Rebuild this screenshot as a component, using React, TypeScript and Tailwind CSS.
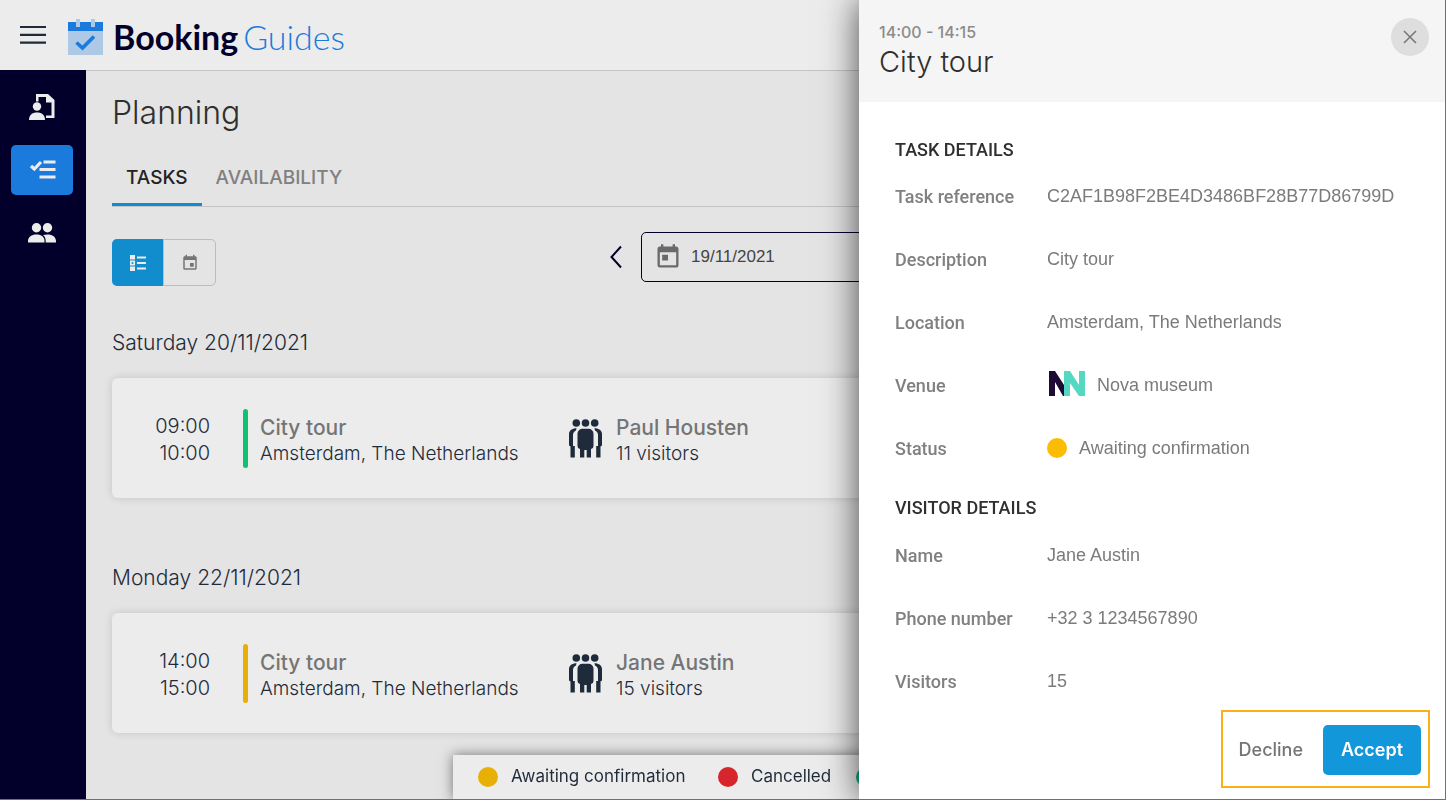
import type { ReactNode } from "react";
import { MdEvent, MdToday } from "react-icons/md";

type Task = {
  start: string;
  end: string;
  title: string;
  place: string;
  guest: string;
  visitors: string;
  bar: string;
};

const days: { label: string; task: Task }[] = [
  {
    label: "Saturday 20/11/2021",
    task: {
      start: "09:00",
      end: "10:00",
      title: "City tour",
      place: "Amsterdam, The Netherlands",
      guest: "Paul Housten",
      visitors: "11 visitors",
      bar: "bg-[#0fc173]",
    },
  },
  {
    label: "Monday 22/11/2021",
    task: {
      start: "14:00",
      end: "15:00",
      title: "City tour",
      place: "Amsterdam, The Netherlands",
      guest: "Jane Austin",
      visitors: "15 visitors",
      bar: "bg-[#e8b004]",
    },
  },
];

function Logo() {
  return (
    <a href="#home" className="flex items-center pt-1">
      <svg width="35" height="36" viewBox="0 0 35 36" aria-hidden="true">
        <rect y="3" width="35" height="33" fill="#adc9e5" />
        <rect y="3" width="35" height="9" fill="#1b7bdc" />
        <rect x="8" width="4" height="8" fill="#adc9e5" />
        <rect x="23" width="4" height="8" fill="#adc9e5" />
        <path d="M8.500 23.500l6 5.500L26 17.500" fill="none" stroke="#1b7bdc" strokeWidth="3.600" />
      </svg>
      <span className="ml-[10px] font-[Lato] text-[34px] leading-10 font-bold text-[#02002b]">Booking</span>
      <span className="ml-[5px] font-[Lato] text-[34px] leading-10 font-light text-[#1b7bdc]">Guides</span>
    </a>
  );
}

function GuideIcon() {
  return (
    <svg width="28" height="28" viewBox="0 0 28 28" aria-hidden="true" fill="#ececec">
      <path d="M8 8.500V1h12l6.500 6v18H18v-2.500h5.500V9.500H18V4h-7.500v4.500z" />
      <circle cx="9" cy="13.500" r="4.200" />
      <path d="M1 27c0-5 3-7.500 8-7.500s8 2.500 8 7.500z" />
    </svg>
  );
}

function ChecklistIcon() {
  return (
    <svg width="28" height="24" viewBox="0 0 28 24" aria-hidden="true" fill="none" stroke="#ececec">
      <path d="M3 8l3.300 3L13 4" strokeWidth="3.200" />
      <path d="M15.500 4H27.500M11.500 11.500h16M11.500 19h16" strokeWidth="2.800" />
    </svg>
  );
}

function PeopleIcon() {
  return (
    <svg width="28" height="20" viewBox="0 0 28 20" aria-hidden="true" fill="#ececec">
      <circle cx="8.500" cy="4.800" r="4.700" />
      <circle cx="19.500" cy="4.800" r="4.700" />
      <path d="M0 19.500V18c0-4 3.500-6.500 8.500-6.500S16.500 14 16.500 18v1.500z" />
      <path d="M17.700 19.500V18c0-2.700-1-4.700-2.700-6 1.300-.4 2.800-.6 4.500-.6 5 0 8.500 2.600 8.500 6.600v1.500z" />
    </svg>
  );
}

function ListIcon() {
  return (
    <svg width="18" height="18" viewBox="0 0 18 18" aria-hidden="true" fill="#ececec">
      <path d="M1 1h5v4.500H1zM1 6.500h5v5H1zM1 12.500h5V17H1zM8 2.500h9v2H8zM8 8h9v2H8zM8 13.500h9v2H8z" />
      <circle cx="3.500" cy="9" r="1" fill="#118dce" />
    </svg>
  );
}

function GroupIcon() {
  return (
    <svg width="33" height="39" viewBox="0 0 33 39" aria-hidden="true" fill="#1f2b3a">
      <circle cx="7.300" cy="4" r="3.800" />
      <circle cx="16.500" cy="4" r="3.800" />
      <circle cx="25.700" cy="4" r="3.800" />
      <path d="M13.500 9.800h6a5 5 0 0 1 5 5V27a3 3 0 0 1-2.500 3v8.500h-4.300V31h-2.400v7.500H11V30a3 3 0 0 1-2.500-3V14.800a5 5 0 0 1 5-5z" />
      <path d="M7.500 9.200C3 9.200 0 11.500 0 15v11.500l1.500 1V38.500h4.300V27H4V16c0-2.500 1.200-3.600 3-4.600z" />
      <path d="M25.500 9.200c4.500 0 7.500 2.300 7.500 5.800v11.500l-1.500 1V38.500h-4.300V27H29V16c0-2.500-1.200-3.600-3-4.600z" />
    </svg>
  );
}

function MuseumLogo() {
  return (
    <svg width="36" height="27" viewBox="0 0 36 27" aria-hidden="true">
      <path d="M0 1h6l9 14V1h4v25h-5L6 12v14H0z" fill="#1d0b35" />
      <path d="M15 1h6l9 14V1h6v25h-6l-9-13v13h-6z" fill="#55d8c1" />
    </svg>
  );
}

function TaskCard({ task }: { task: Task }) {
  return (
    <article className="flex h-[120px] items-center rounded-md bg-[#ececec] shadow-[0_0_8px_rgba(0,0,0,0.14)]">
      <div className="w-[98px] pt-1 text-right text-xl leading-[27px] font-light text-[#1f2b3a]">
        <p>{task.start}</p>
        <p>{task.end}</p>
      </div>
      <span className={`mr-3 ml-[33px] h-[59px] w-[5px] rounded-full ${task.bar}`} />
      <div className="w-[309px] pt-1">
        <h3 className="text-[21px] leading-[27px] font-medium text-[#757575]">{task.title}</h3>
        <p className="text-[19px] leading-[25px] font-light text-[#1f2b3a]">{task.place}</p>
      </div>
      <GroupIcon />
      <div className="ml-[14px] pt-1">
        <h3 className="text-[21px] leading-[27px] font-medium text-[#757575]">{task.guest}</h3>
        <p className="text-[19px] leading-[25px] font-light text-[#1f2b3a]">{task.visitors}</p>
      </div>
    </article>
  );
}

function Detail({ label, children }: { label: string; children: ReactNode }) {
  return (
    <div className="flex h-6 items-center">
      <dt className="w-[152px] shrink-0 font-[Roboto] text-lg leading-6 font-medium text-[#808080]">{label}</dt>
      <dd className="flex items-center pb-0.5 font-['Liberation_Sans'] text-lg leading-6 text-[#7b7b7b]">{children}</dd>
    </div>
  );
}

function TaskPanel() {
  return (
    <aside className="fixed inset-y-0 right-0 flex w-[587px] flex-col border-r border-b border-[#707070] bg-white shadow-[0_0_34px_rgba(0,0,0,0.7)]">
      <header className="flex h-[102px] items-start justify-between bg-[#f5f5f5] pt-[18px] pr-4 pl-5">
        <div>
          <p className="pt-1 text-base leading-5 font-medium text-[#8c8c8c]">14:00 - 14:15</p>
          <h2 className="text-[29px] leading-10 font-light text-[#2f2f2f]">City tour</h2>
        </div>
        <button aria-label="Close" className="flex size-[38px] items-center justify-center rounded-full bg-[#dedede]">
          <svg width="14" height="14" viewBox="0 0 14 14" fill="none" stroke="#757575" strokeWidth="1.500">
            <path d="M1 1l12 12M13 1L1 13" />
          </svg>
        </button>
      </header>
      <div className="px-9 pt-9">
        <h3 className="mb-[23px] font-[Roboto] text-lg leading-6 font-medium text-[#2f2f2f]">TASK DETAILS</h3>
        <dl className="flex flex-col gap-[39px]">
          <Detail label="Task reference">C2AF1B98F2BE4D3486BF28B77D86799D</Detail>
          <Detail label="Description">City tour</Detail>
          <Detail label="Location">Amsterdam, The Netherlands</Detail>
          <Detail label="Venue">
            <span className="mr-3 ml-0.5 pb-1">
              <MuseumLogo />
            </span>
            Nova museum
          </Detail>
          <Detail label="Status">
            <span className="mr-3 size-5 rounded-full bg-[#fbbd04]" />
            Awaiting confirmation
          </Detail>
        </dl>
        <h3 className="mt-[35px] mb-6 font-[Roboto] text-lg leading-6 font-medium text-[#2f2f2f]">VISITOR DETAILS</h3>
        <dl className="flex flex-col gap-[39px]">
          <Detail label="Name">Jane Austin</Detail>
          <Detail label="Phone number">+32 3 1234567890</Detail>
          <Detail label="Visitors">15</Detail>
        </dl>
      </div>
      <footer className="mt-4 mr-[15px] flex h-[78px] items-center self-end border-2 border-[#fbb116] pt-0.5 pr-[7px] pl-4">
        <button className="text-lg leading-6 font-medium text-[#757575]">Decline</button>
        <button className="ml-5 h-[50px] w-[98px] rounded-[5px] bg-[#1297db] text-lg leading-6 font-semibold text-white">
          Accept
        </button>
      </footer>
    </aside>
  );
}

export default function App() {
  return (
    <div className="flex min-h-screen flex-col border-b border-[#707070] bg-[#e4e4e4] font-[Inter,sans-serif]">
      <header className="flex h-[71px] items-center border-b border-[#c4c4c4] bg-[#ececec] pl-5">
        <button aria-label="Menu" className="mr-[22px]">
          <svg width="26" height="20" viewBox="0 0 26 20" fill="none" stroke="#1f2b3a" strokeWidth="2.200">
            <path d="M0 2h26M0 9.800h26M0 17.600h26" />
          </svg>
        </button>
        <Logo />
      </header>
      <div className="flex flex-1">
        <nav className="-mt-px flex w-[86px] shrink-0 flex-col gap-[13px] bg-[#02002b] pt-3 pl-[11px]">
          <a href="#guides" aria-label="Guides" className="flex h-[50px] w-[62px] items-center justify-center">
            <GuideIcon />
          </a>
          <a
            href="#planning"
            aria-label="Planning"
            className="flex h-[50px] w-[62px] items-center justify-center rounded-[5px] bg-[#1b7bdc]"
          >
            <ChecklistIcon />
          </a>
          <a href="#people" aria-label="People" className="flex h-[50px] w-[62px] items-center justify-center">
            <PeopleIcon />
          </a>
        </nav>
        <main className="min-w-0 flex-1 px-[26px] pt-[22px]">
          <h1 className="text-[32px] leading-10 font-light text-[#2f2f2f]">Planning</h1>
          <div className="mt-[17px] flex border-b border-[#c4c4c4]">
            <button className="-mb-px h-14 border-b-[3px] border-[#118dce] px-[14px] pt-1 text-[19px] font-medium text-[#222222]">
              TASKS
            </button>
            <button className="h-14 border-b-[3px] border-transparent px-[14px] pt-1 text-[19px] font-medium text-[#808080]">
              AVAILABILITY
            </button>
          </div>
          <div className="mt-[25px] grid grid-cols-[1fr_auto_1fr] items-start">
            <div className="mt-[7px] flex h-[47px] w-[104px]">
              <button
                aria-label="List view"
                className="flex w-[51px] items-center justify-center rounded-l-[5px] bg-[#118dce]"
              >
                <ListIcon />
              </button>
              <button
                aria-label="Calendar view"
                className="flex flex-1 items-center justify-center rounded-r-[5px] border border-[#bdbdbd]"
              >
                <MdEvent size={18} color="#757575" />
              </button>
            </div>
            <div className="flex items-center gap-[19px]">
              <button aria-label="Previous day">
                <svg width="12" height="24" viewBox="0 0 12 24" fill="none" stroke="#02002b" strokeWidth="2">
                  <path d="M11 1.500L1.500 12 11 22.500" />
                </svg>
              </button>
              <label className="flex h-[50px] w-[250px] items-center rounded-[5px] border border-[#02002b] pl-3">
                <MdToday size={28} color="#6a6a6a" />
                <input
                  aria-label="Date"
                  defaultValue="19/11/2021"
                  className="ml-[9px] w-[160px] bg-transparent font-['Liberation_Sans'] text-[17px] text-[#444444] outline-none"
                />
              </label>
              <button aria-label="Next day">
                <svg width="12" height="24" viewBox="0 0 12 24" fill="none" stroke="#02002b" strokeWidth="2">
                  <path d="M1 1.500L10.500 12 1 22.500" />
                </svg>
              </button>
            </div>
          </div>
          <div className="mt-[43px] flex flex-col gap-[66px]">
            {days.map((day) => (
              <section key={day.label}>
                <h2 className="mb-[21px] text-[21px] leading-7 font-light text-[#1f2b3a]">{day.label}</h2>
                <TaskCard task={day.task} />
              </section>
            ))}
          </div>
        </main>
      </div>
      <div className="pointer-events-none fixed right-0 bottom-px left-[86px] flex justify-center overflow-hidden pt-4">
        <ul className="flex h-11 w-[626px] items-center bg-[#ececec] pl-[25px] text-[17px] font-normal text-[#1f2b3a] shadow-[0_0_12px_rgba(0,0,0,0.5)]">
          <li className="flex w-[240px] items-center gap-[13px]">
            <span className="size-5 rounded-full bg-[#e8b004]" />
            Awaiting confirmation
          </li>
          <li className="flex w-[138px] items-center gap-[13px]">
            <span className="size-5 rounded-full bg-[#d7262b]" />
            Cancelled
          </li>
          <li className="flex items-center gap-[13px]">
            <span className="size-5 rounded-full bg-[#0fb173]" />
            Confirmed
          </li>
        </ul>
      </div>
      <TaskPanel />
    </div>
  );
}
